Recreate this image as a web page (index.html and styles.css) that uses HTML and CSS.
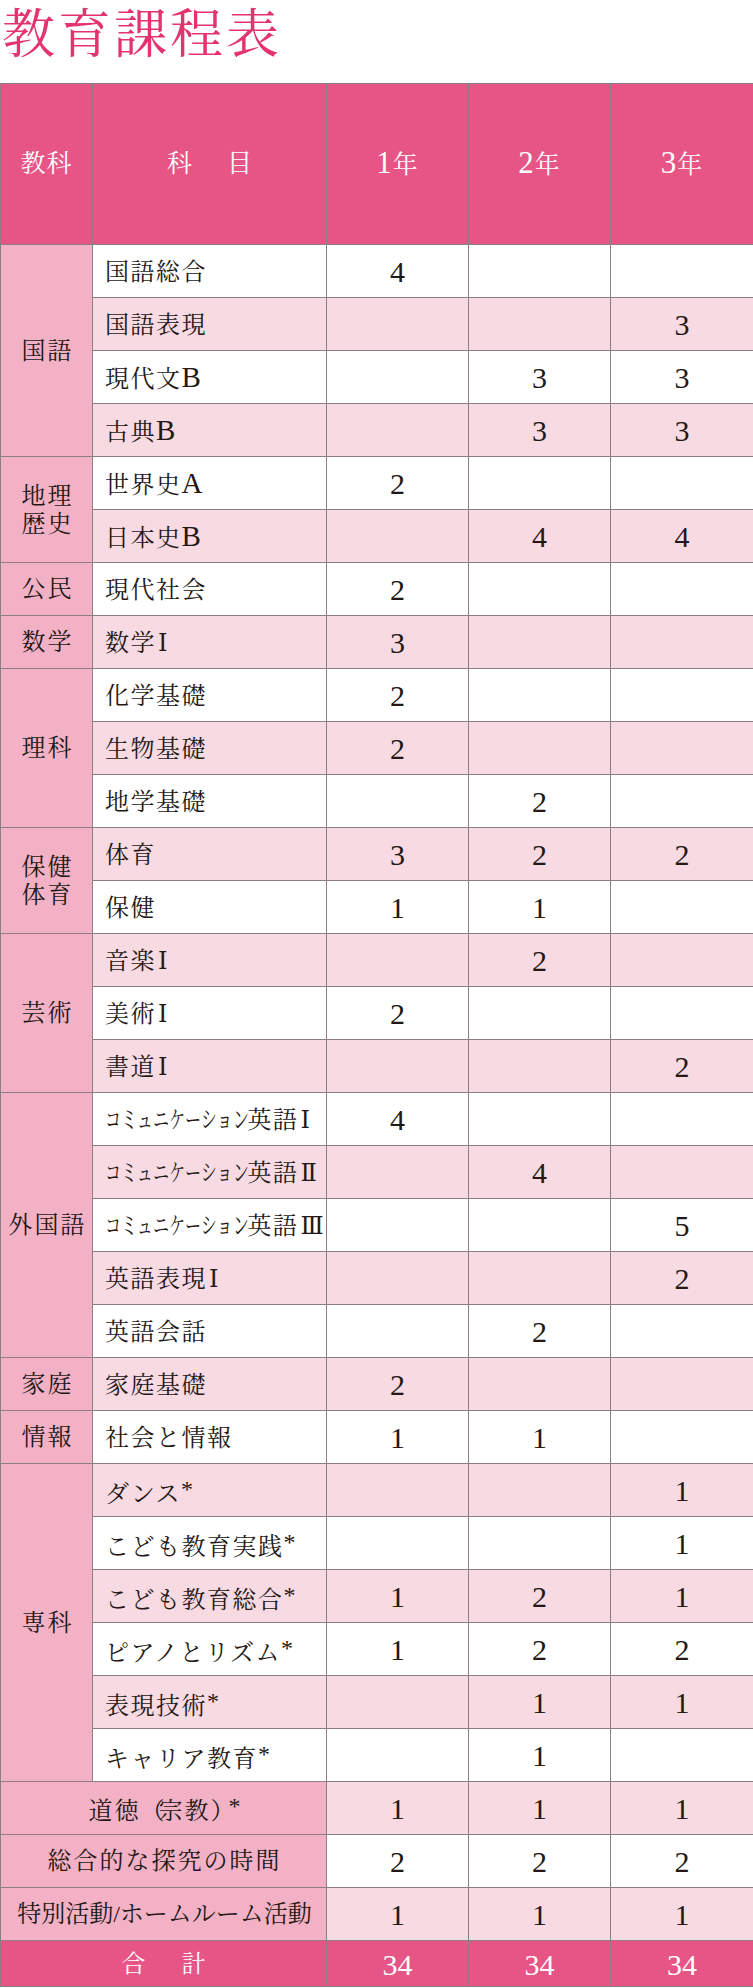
FILE: index.html
```html
<!DOCTYPE html>
<html lang="ja">
<head>
<meta charset="utf-8">
<title>教育課程表</title>
<link rel="stylesheet" href="styles.css">
</head>
<body>
<h1 class="title">教育課程表</h1>
<table class="curr">
  <colgroup>
    <col class="c-cat"><col class="c-sub"><col class="c-y1"><col class="c-y2"><col class="c-y3">
  </colgroup>
  <thead>
    <tr class="head">
      <th>教科</th><th class="sp">科　目</th><th><span class="num">1</span>年</th><th><span class="num">2</span>年</th><th><span class="num">3</span>年</th>
    </tr>
  </thead>
  <tbody>
    <tr class="w"><td class="cat" rowspan="4">国語</td><td class="sub">国語総合</td><td class="n">4</td><td class="n"></td><td class="n"></td></tr>
    <tr class="p"><td class="sub">国語表現</td><td class="n"></td><td class="n"></td><td class="n">3</td></tr>
    <tr class="w"><td class="sub">現代文<span class="lat">B</span></td><td class="n"></td><td class="n">3</td><td class="n">3</td></tr>
    <tr class="p"><td class="sub">古典<span class="lat">B</span></td><td class="n"></td><td class="n">3</td><td class="n">3</td></tr>

    <tr class="w"><td class="cat two" rowspan="2">地理<br>歴史</td><td class="sub">世界史<span class="lat">A</span></td><td class="n">2</td><td class="n"></td><td class="n"></td></tr>
    <tr class="p"><td class="sub">日本史<span class="lat">B</span></td><td class="n"></td><td class="n">4</td><td class="n">4</td></tr>

    <tr class="w"><td class="cat">公民</td><td class="sub">現代社会</td><td class="n">2</td><td class="n"></td><td class="n"></td></tr>

    <tr class="p"><td class="cat">数学</td><td class="sub">数学<span class="rn">Ⅰ</span></td><td class="n">3</td><td class="n"></td><td class="n"></td></tr>

    <tr class="w"><td class="cat" rowspan="3">理科</td><td class="sub">化学基礎</td><td class="n">2</td><td class="n"></td><td class="n"></td></tr>
    <tr class="p"><td class="sub">生物基礎</td><td class="n">2</td><td class="n"></td><td class="n"></td></tr>
    <tr class="w"><td class="sub">地学基礎</td><td class="n"></td><td class="n">2</td><td class="n"></td></tr>

    <tr class="p"><td class="cat two" rowspan="2">保健<br>体育</td><td class="sub">体育</td><td class="n">3</td><td class="n">2</td><td class="n">2</td></tr>
    <tr class="w"><td class="sub">保健</td><td class="n">1</td><td class="n">1</td><td class="n"></td></tr>

    <tr class="p"><td class="cat" rowspan="3">芸術</td><td class="sub">音楽<span class="rn">Ⅰ</span></td><td class="n"></td><td class="n">2</td><td class="n"></td></tr>
    <tr class="w"><td class="sub">美術<span class="rn">Ⅰ</span></td><td class="n">2</td><td class="n"></td><td class="n"></td></tr>
    <tr class="p"><td class="sub">書道<span class="rn">Ⅰ</span></td><td class="n"></td><td class="n"></td><td class="n">2</td></tr>

    <tr class="w"><td class="cat" rowspan="5">外国語</td><td class="sub"><span class="cond">コミュニケーション</span>英語<span class="rn">Ⅰ</span></td><td class="n">4</td><td class="n"></td><td class="n"></td></tr>
    <tr class="p"><td class="sub"><span class="cond">コミュニケーション</span>英語<span class="rn">Ⅱ</span></td><td class="n"></td><td class="n">4</td><td class="n"></td></tr>
    <tr class="w"><td class="sub"><span class="cond">コミュニケーション</span>英語<span class="rn">Ⅲ</span></td><td class="n"></td><td class="n"></td><td class="n">5</td></tr>
    <tr class="p"><td class="sub">英語表現<span class="rn">Ⅰ</span></td><td class="n"></td><td class="n"></td><td class="n">2</td></tr>
    <tr class="w"><td class="sub">英語会話</td><td class="n"></td><td class="n">2</td><td class="n"></td></tr>

    <tr class="p"><td class="cat">家庭</td><td class="sub">家庭基礎</td><td class="n">2</td><td class="n"></td><td class="n"></td></tr>

    <tr class="w"><td class="cat">情報</td><td class="sub">社会と情報</td><td class="n">1</td><td class="n">1</td><td class="n"></td></tr>

    <tr class="p"><td class="cat" rowspan="6">専科</td><td class="sub">ダンス<span class="ast">*</span></td><td class="n"></td><td class="n"></td><td class="n">1</td></tr>
    <tr class="w"><td class="sub">こども教育実践<span class="ast">*</span></td><td class="n"></td><td class="n"></td><td class="n">1</td></tr>
    <tr class="p"><td class="sub">こども教育総合<span class="ast">*</span></td><td class="n">1</td><td class="n">2</td><td class="n">1</td></tr>
    <tr class="w"><td class="sub">ピアノとリズム<span class="ast">*</span></td><td class="n">1</td><td class="n">2</td><td class="n">2</td></tr>
    <tr class="p"><td class="sub">表現技術<span class="ast">*</span></td><td class="n"></td><td class="n">1</td><td class="n">1</td></tr>
    <tr class="w"><td class="sub">キャリア教育<span class="ast">*</span></td><td class="n"></td><td class="n">1</td><td class="n"></td></tr>

    <tr class="p"><td class="cat wide" colspan="2">道徳<span class="par">（</span>宗教<span class="par">）</span><span class="ast">*</span></td><td class="n">1</td><td class="n">1</td><td class="n">1</td></tr>
    <tr class="w"><td class="cat wide" colspan="2">総合的な探究の時間</td><td class="n">2</td><td class="n">2</td><td class="n">2</td></tr>
    <tr class="p"><td class="cat wide tight" colspan="2">特別活動/ホームルーム活動</td><td class="n">1</td><td class="n">1</td><td class="n">1</td></tr>
  </tbody>
  <tfoot>
    <tr class="total"><td colspan="2" class="tlabel">合　計</td><td class="n">34</td><td class="n">34</td><td class="n">34</td></tr>
  </tfoot>
</table>
</body>
</html>
```

FILE: styles.css
```css
html, body {
  margin: 0;
  padding: 0;
  background: #ffffff;
}

body {
  width: 753px;
  font-family: "Liberation Serif", "Noto Serif CJK JP", "Noto Sans CJK JP", serif;
  color: #231815;
}

.title {
  margin: 0;
  padding: 0 0 0 2px;
  height: 83px;
  font-size: 53px;
  line-height: 60px;
  font-weight: 400;
  letter-spacing: 3px;
  color: #e4336f;
  font-family: "Noto Serif CJK JP", "Noto Sans CJK JP", serif;
}

.curr {
  width: 753px;
  border-collapse: collapse;
  table-layout: fixed;
}

.c-cat { width: 92px; }
.c-sub { width: 234px; }
.c-y1 { width: 142px; }
.c-y2 { width: 142px; }
.c-y3 { width: 143px; }

.curr th,
.curr td {
  border: 1px solid #8d7d84;
  padding: 0;
  font-weight: 400;
  vertical-align: middle;
}

.head {
  height: 161px;
  background: #e75586;
  color: #ffffff;
}

.curr .head th {
  font-size: 25px;
  line-height: 30px;
  text-align: center;
  letter-spacing: 1px;
}

.curr .head th.sp {
  letter-spacing: 5px;
  padding-left: 5px;
}

.head .num {
  font-size: 31px;
}

tbody tr {
  height: 53px;
}

tr.w { background: #ffffff; }
tr.p { background: #f8dae3; }

.curr .cat {
  background: #f3b1c6;
  text-align: center;
  font-size: 24px;
  line-height: 28px;
  letter-spacing: 2px;
  padding-left: 2px;
}

.curr .cat.tight {
  letter-spacing: 0;
}

.curr .sub {
  padding-left: 12px;
  padding-top: 2px;
  font-size: 24px;
  line-height: 28px;
  letter-spacing: 1.5px;
  white-space: nowrap;
}

.lat {
  font-family: "Liberation Serif", serif;
  font-size: 29px;
  letter-spacing: 0;
}

.rn {
  font-family: "Liberation Serif", "DejaVu Serif", "Noto Sans CJK JP", serif;
  font-size: 24px;
  letter-spacing: 0;
  padding-left: 2px;
}

.ast {
  font-family: "Liberation Serif", serif;
  font-size: 24px;
  letter-spacing: 0;
  vertical-align: 5px;
}

.par {
  letter-spacing: -6px;
}

.cond {
  display: inline-block;
  letter-spacing: 0;
  transform: scaleX(0.67);
  transform-origin: left center;
  margin-right: -72px;
}

.curr .n {
  text-align: center;
  font-size: 30px;
  line-height: 30px;
  font-family: "Liberation Serif", serif;
  padding-top: 2px;
}

.total {
  height: 46px;
  background: #e75586;
  color: #ffffff;
}

.curr .tlabel {
  text-align: center;
  font-size: 24px;
  line-height: 28px;
  letter-spacing: 6px;
  padding-left: 6px;
}
```
